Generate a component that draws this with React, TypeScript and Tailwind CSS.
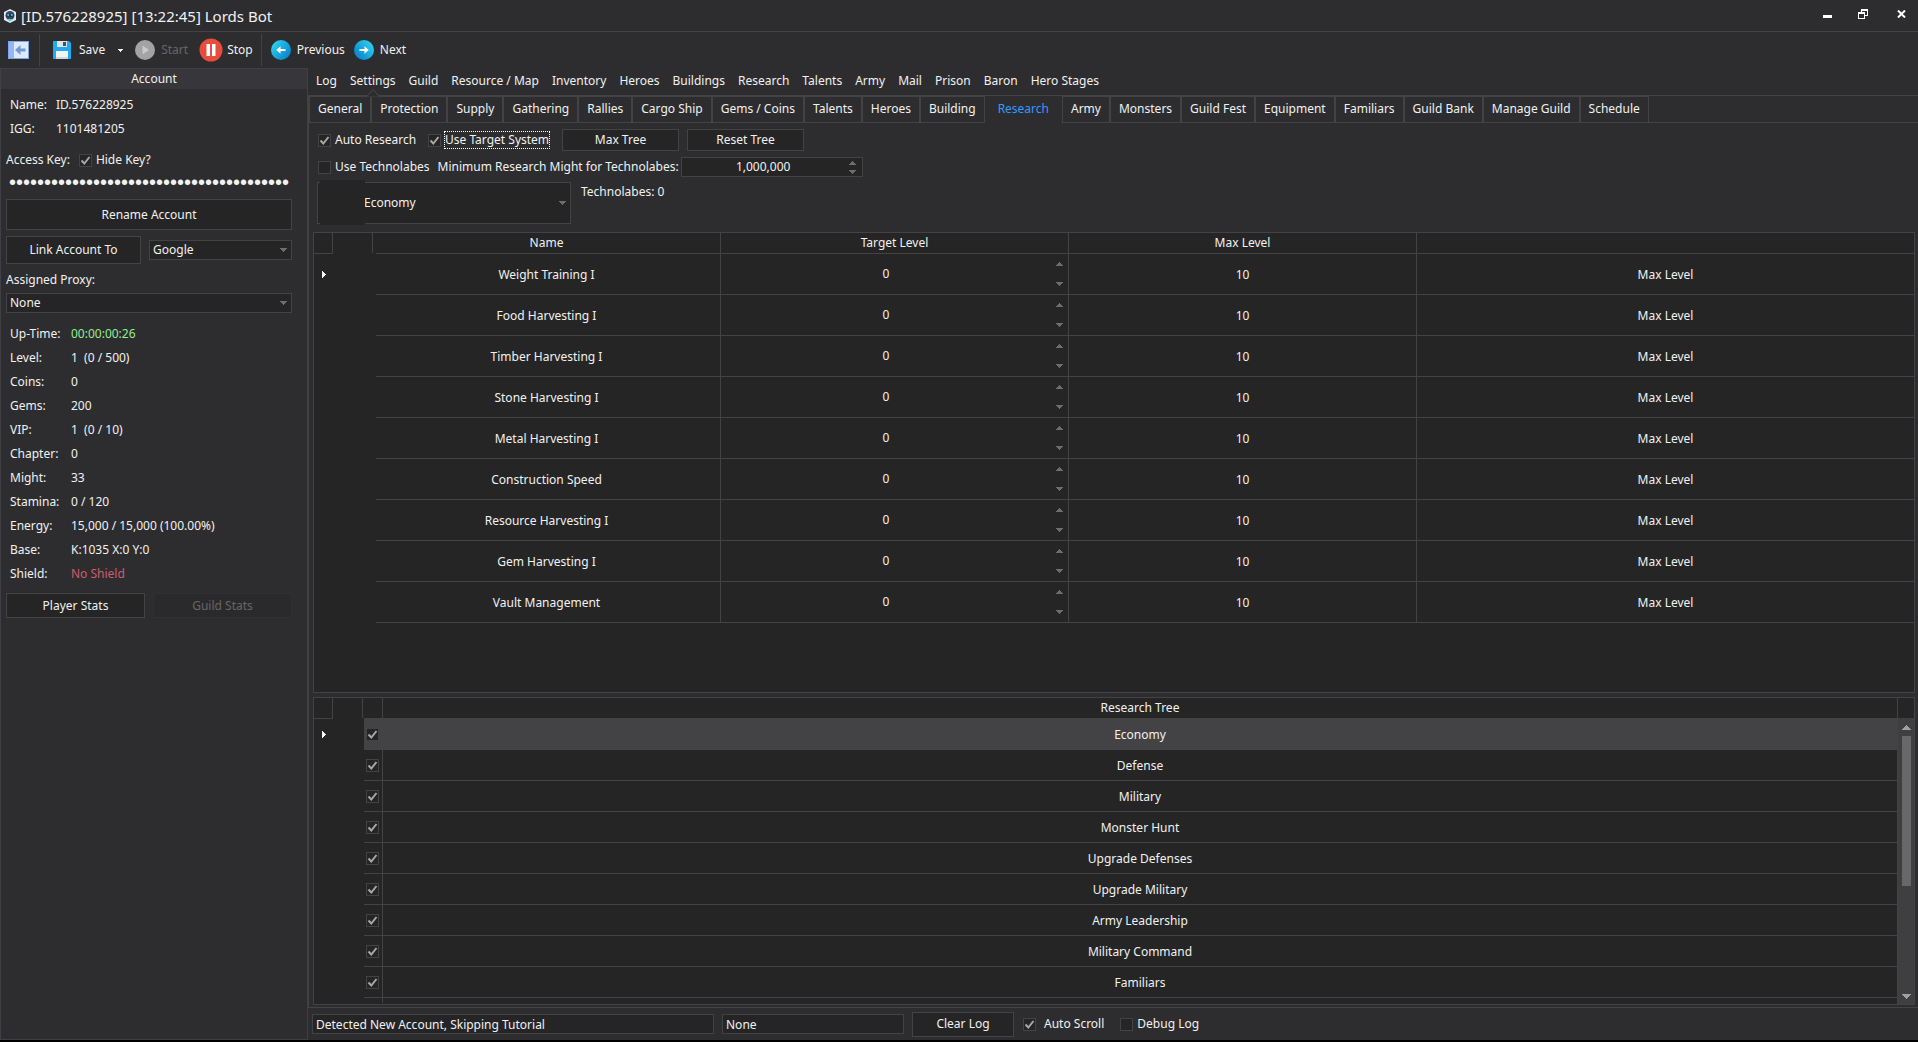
import { useState } from "react";
import type { ReactNode } from "react";

const menuItems = ["Log", "Settings", "Guild", "Resource / Map", "Inventory", "Heroes", "Buildings", "Research", "Talents", "Army", "Mail", "Prison", "Baron", "Hero Stages"];

const tabs = ["General", "Protection", "Supply", "Gathering", "Rallies", "Cargo Ship", "Gems / Coins", "Talents", "Heroes", "Building", "Research", "Army", "Monsters", "Guild Fest", "Equipment", "Familiars", "Guild Bank", "Manage Guild", "Schedule"];

const stats: [string, string, string?][] = [
  ["Up-Time:", "00:00:00:26", "text-[#90ee90]"],
  ["Level:", "1  (0 / 500)"],
  ["Coins:", "0"],
  ["Gems:", "200"],
  ["VIP:", "1  (0 / 10)"],
  ["Chapter:", "0"],
  ["Might:", "33"],
  ["Stamina:", "0 / 120"],
  ["Energy:", "15,000 / 15,000 (100.00%)"],
  ["Base:", "K:1035 X:0 Y:0"],
  ["Shield:", "No Shield", "text-[#cd5c6c]"],
];

const researches = ["Weight Training I", "Food Harvesting I", "Timber Harvesting I", "Stone Harvesting I", "Metal Harvesting I", "Construction Speed", "Resource Harvesting I", "Gem Harvesting I", "Vault Management"];

const trees = ["Economy", "Defense", "Military", "Monster Hunt", "Upgrade Defenses", "Upgrade Military", "Army Leadership", "Military Command", "Familiars"];

function Arrow({ dir, className }: { dir: "up" | "down"; className?: string }) {
  return (
    <svg viewBox="0 0 7 4" className={`h-1 w-[7px] ${className ?? "text-[#6d6d6d]"}`} fill="currentColor" shapeRendering="crispEdges">
      <path d={dir === "up" ? "M3 0h1v1h1v1h1v1h1v1H0V3h1V2h1V1h1z" : "M0 0h7v1H6v1H5v1H4v1H3V3H2V2H1V1H0z"} />
    </svg>
  );
}

function ScrollArrow({ dir }: { dir: "up" | "down" }) {
  return (
    <svg viewBox="0 0 9 5" className="h-[5px] w-[9px]" fill="#a0a0a0" shapeRendering="crispEdges">
      <path d={dir === "up" ? "M4 0h1v1h1v1h1v1h1v1h1v1H0V4h1V3h1V2h1V1h1z" : "M0 0h9v1H8v1H7v1H6v1H5v1H4V4H3V3H2V2H1V1H0z"} />
    </svg>
  );
}

function Check({ label, checked = false, focus = false, hidden = false, gap = "gap-1" }: { label: string; checked?: boolean; focus?: boolean; hidden?: boolean; gap?: string }) {
  const [on, setOn] = useState(checked);
  return (
    <label className={`flex items-center whitespace-nowrap ${gap}`}>
      <span className="relative flex size-[13px] shrink-0">
        <input type="checkbox" aria-label={label} checked={on} onChange={(e) => setOn(e.target.checked)} className="size-[13px] appearance-none border border-[#434346] bg-[#252525]" />
        {on && (
          <svg viewBox="0 0 13 13" className="pointer-events-none absolute inset-0 size-[13px]" fill="none" stroke="#a8a8a8" strokeWidth="2">
            <path d="M2.5 6.5l2.8 3L10.5 3" />
          </svg>
        )}
      </span>
      {!hidden && <span className={focus ? "-ml-px border border-dotted border-white leading-4" : ""}>{label}</span>}
    </label>
  );
}

function Button({ children, className, disabled }: { children: ReactNode; className: string; disabled?: boolean }) {
  return (
    <button type="button" disabled={disabled} className={`border text-center ${disabled ? "border-[#303032] bg-[#2a2a2c] text-[#666666]" : "border-[#434346] bg-[#252525]"} ${className}`}>
      {children}
    </button>
  );
}

function Select({ id, label, value, className, selectClass }: { id?: string; label?: string; value: string; className: string; selectClass: string }) {
  return (
    <span className={`relative flex items-center ${className}`}>
      <select id={id} aria-label={label} className={`h-full w-full appearance-none border border-[#434346] bg-[#252525] ${selectClass}`}>
        <option>{value}</option>
      </select>
      <Arrow dir="down" className="pointer-events-none absolute right-[5px] text-[#6d6d6d]" />
    </span>
  );
}

function Spin({ label, value }: { label: string; value: string }) {
  return (
    <span className="flex h-full items-stretch">
      <input aria-label={label} defaultValue={value} className="w-0 flex-1 bg-transparent text-center outline-none" />
      <span className="flex w-[17px] shrink-0 flex-col pr-px">
        <button type="button" aria-label={`Increase ${label}`} className="flex flex-1 items-center justify-center"><Arrow dir="up" /></button>
        <button type="button" aria-label={`Decrease ${label}`} className="flex flex-1 items-center justify-center"><Arrow dir="down" /></button>
      </span>
    </span>
  );
}

function RowMarker() {
  return (
    <svg viewBox="0 0 4 7" className="mx-auto h-[7px] w-1" fill="#f5f5f5" shapeRendering="crispEdges">
      <path d="M0 0h1v1h1v1h1v1h1v1H3v1H2v1H1v1H0z" />
    </svg>
  );
}

function TitleBar() {
  return (
    <header className="flex h-8 items-center border-b border-[#434346] pl-[3px]">
      <svg viewBox="0 0 14 14" className="size-[14px]">
        <path d="M7 0l6 3v8l-6 3-6-3V3z" fill="#e3eaf0" />
        <circle cx="7" cy="6.5" r="4.5" fill="#34495e" />
        <path d="M3.5 5.500h7v2h-7z" fill="#1c2b3a" />
        <circle cx="5.2" cy="6" r="1" fill="#4fc3f7" />
        <circle cx="8.8" cy="6" r="1" fill="#4fc3f7" />
        <path d="M3.5 10h7L7 12.500z" fill="#4dd0e1" />
      </svg>
      <h1 className="ml-1 text-[15px] leading-5">[ID.576228925] [13:22:45] Lords Bot</h1>
      <div className="ml-auto flex items-center pr-3 pb-1">
        <button type="button" aria-label="Minimize" className="flex h-4 w-6 items-center justify-center">
          <svg viewBox="0 0 9 9" className="size-[9px]"><path d="M0 6h9v3H0z" fill="#fff" /></svg>
        </button>
        <button type="button" aria-label="Restore" className="ml-3 flex h-4 w-6 items-center justify-center">
          <svg viewBox="0 0 10 10" className="size-[10px]" fill="#fff" fillRule="evenodd" shapeRendering="crispEdges">
            <path d="M3 0h7v7H7V6h2V2H4v1H3zM0 3h7v7H0zM1 5v4h5V5z" />
          </svg>
        </button>
        <button type="button" aria-label="Close" className="ml-[22px] flex h-4 w-[9px] items-center justify-center">
          <svg viewBox="0 0 9 8" className="h-2 w-[9px]" stroke="#fff" strokeWidth="2"><path d="M1 0.5l7 7M8 0.5l-7 7" /></svg>
        </button>
      </div>
    </header>
  );
}

function ArrowDisc({ flip }: { flip?: boolean }) {
  return (
    <svg viewBox="0 0 20 20" className="size-5">
      <defs>
        <linearGradient id={flip ? "discNext" : "discPrev"} x1={flip ? 1 : 0} y1="0.2" x2={flip ? 0 : 1} y2="1">
          <stop offset="0" stopColor="#2fd3ee" />
          <stop offset="1" stopColor="#0277c8" />
        </linearGradient>
      </defs>
      <circle cx="10" cy="10" r="10" fill={flip ? "url(#discNext)" : "url(#discPrev)"} />
      <path d={flip ? "M5.5 9h5V6.2l4.3 3.8-4.3 3.8V11h-5z" : "M14.5 9h-5V6.2L5.2 10l4.3 3.8V11h5z"} fill="#fff" />
    </svg>
  );
}

function Toolbar() {
  return (
    <nav aria-label="Toolbar" className="flex h-9 items-center">
      <button type="button" aria-label="Collapse panel" className="ml-2">
        <svg viewBox="0 0 21 18" className="h-[18px] w-[21px]">
          <path d="M0 0h21v18H0z" fill="#7ea6e8" />
          <path d="M1 1h5v16H1z" fill="#93b7f2" />
          <path d="M6 1h14v16H6z" fill="#dceafb" />
          <path d="M17.5 7.500h-5V4L7 9l5.500 5v-3.500h5z" fill="#7399d4" />
        </svg>
      </button>
      <span className="ml-[10px] h-8 w-px bg-[#434346]" />
      <button type="button" className="ml-[13px] flex items-center">
        <svg viewBox="0 0 18 18" className="size-[18px]">
          <path d="M0 0h16l2 2v16H0z" fill="#22aaf0" />
          <path d="M4 0h10v6H4z" fill="#dfe6ea" />
          <path d="M10 1h3v4h-3z" fill="#3c5566" />
          <path d="M3 10h12v8H3z" fill="#f4f4f4" />
          <path d="M3 16h12v2H3z" fill="#cfd8dc" />
        </svg>
        <span className="ml-2">Save</span>
      </button>
      <button type="button" aria-label="Save options" className="ml-[13px] flex h-5 w-[17px] items-center justify-start">
        <svg viewBox="0 0 5 3" className="h-[3px] w-[5px]" fill="#f0f0f0" shapeRendering="crispEdges"><path d="M0 0h5v1H4v1H3v1H2V2H1V1H0z" /></svg>
      </button>
      <button type="button" disabled className="flex items-center text-[#666666]">
        <svg viewBox="0 0 20 20" className="size-5"><circle cx="10" cy="10" r="10" fill="#a3a3a3" /><path d="M7.5 5.500l6.500 4.500-6.500 4.500z" fill="#c9c9c9" /></svg>
        <span className="ml-[6px]">Start</span>
      </button>
      <button type="button" className="ml-[11px] flex items-center">
        <svg viewBox="0 0 24 24" className="size-6"><circle cx="12" cy="12" r="11.5" fill="#e74c3c" /><path d="M7.500 6h3.500v12H7.500zM13 6h3.500v12H13z" fill="#fff" /></svg>
        <span className="ml-1">Stop</span>
      </button>
      <span className="ml-2 h-8 w-px bg-[#434346]" />
      <button type="button" className="ml-[9px] flex items-center"><ArrowDisc /><span className="ml-[6px]">Previous</span></button>
      <button type="button" className="ml-[9px] flex items-center"><ArrowDisc flip /><span className="ml-[6px]">Next</span></button>
    </nav>
  );
}

function AccountPanel() {
  return (
    <aside className="flex w-[308px] shrink-0 flex-col border border-[#3f3f46]">
      <h2 className="h-5 bg-[#37373b] text-center leading-5">Account</h2>
      <div className="flex flex-col pr-[15px] pl-[5px]">
        <dl className="grid grid-cols-[46px_1fr] pt-1 pl-1 leading-6">
          <dt>Name:</dt><dd>ID.576228925</dd>
          <dt>IGG:</dt><dd>1101481205</dd>
        </dl>
        <div className="mt-[9px] flex h-5 items-center gap-[9px]">
          <label htmlFor="access-key">Access Key:</label>
          <Check label="Hide Key?" checked />
        </div>
        <input id="access-key" type="password" defaultValue={"0".repeat(40)} className="mt-0.5 h-5 bg-transparent pl-[3px] font-['Liberation_Sans',sans-serif] text-xl outline-none" />
        <Button className="mt-[7px] h-[31px]">Rename Account</Button>
        <div className="mt-[6px] flex items-center gap-2">
          <Button className="h-7 w-[135px]">Link Account To</Button>
          <Select label="Link target" value="Google" className="h-5 flex-1" selectClass="pl-[3px]" />
        </div>
        <label htmlFor="proxy" className="mt-[6px] leading-5">Assigned Proxy:</label>
        <Select id="proxy" value="None" className="mt-[3px] h-5" selectClass="pl-[3px]" />
        <dl className="mt-[9px] grid grid-cols-[61px_1fr] pl-1 leading-6">
          {stats.map(([k, v, c]) => (
            <div key={k} className="contents">
              <dt>{k}</dt>
              <dd className={`whitespace-pre ${c ?? ""}`}>{v}</dd>
            </div>
          ))}
        </dl>
        <div className="mt-[7px] flex gap-2">
          <Button className="h-[25px] flex-1">Player Stats</Button>
          <Button className="h-[25px] flex-1" disabled>Guild Stats</Button>
        </div>
      </div>
    </aside>
  );
}

function TargetTable() {
  const line = "border-b border-[#434346]";
  return (
    <div className="min-h-0 flex-[3] overflow-hidden border border-[#434346] bg-[#252525]">
      <table className="w-full table-fixed border-separate border-spacing-0 text-center">
        <colgroup>
          <col className="w-[19px]" /><col className="w-10" /><col className="w-[21.75%]" /><col className="w-[21.75%]" /><col className="w-[21.75%]" /><col />
        </colgroup>
        <thead>
          <tr className="h-[21px]">
            <th className={`border-r ${line}`} />
            <th className="border-r border-[#434346]" />
            {["Name", "Target Level", "Max Level"].map((h) => <th key={h} className={`border-r p-0 font-normal ${line}`}>{h}</th>)}
            <th className={line} />
          </tr>
        </thead>
        <tbody>
          {researches.map((name, i) => (
            <tr key={name} className="h-[41px]">
              <td className="p-0">{i === 0 && <RowMarker />}</td>
              <td className="relative p-0"><span className="absolute -top-px left-0 h-[42px] w-[43px] bg-[#252525]" /></td>
              <td className={`border-r p-0 pt-0.5 ${line}`}>{name}</td>
              <td className={`h-[41px] border-r p-0 ${line}`}><Spin label={`${name} target level`} value="0" /></td>
              <td className={`border-r p-0 pt-0.5 ${line}`}>10</td>
              <td className={`p-0 pt-0.5 ${line}`}><button type="button" className="w-full">Max Level</button></td>
            </tr>
          ))}
        </tbody>
      </table>
    </div>
  );
}

function TreeTable() {
  const line = "border-b border-[#434346]";
  return (
    <div className="mt-1 flex min-h-0 flex-[2] overflow-hidden border border-[#434346] bg-[#252525]">
      <table className="h-0 flex-1 table-fixed border-separate border-spacing-0 text-center">
        <colgroup>
          <col className="w-[19px]" /><col className="w-[30px]" /><col className="w-5" /><col />
        </colgroup>
        <thead>
          <tr className="h-[21px]">
            <th className={`border-r ${line}`} />
            <th className="border-r border-[#434346]" />
            <th className={`border-r ${line}`} />
            <th className={`p-0 font-normal ${line}`}>Research Tree</th>
          </tr>
        </thead>
        <tbody>
          {trees.map((name, i) => (
            <tr key={name} className={`h-[31px] ${i === 0 ? "bg-[#434345]" : ""}`}>
              <td className="bg-[#252525] p-0">{i === 0 && <RowMarker />}</td>
              <td className="relative bg-[#252525] p-0"><span className="absolute -top-px left-0 h-8 w-[31px] bg-[#252525]" /></td>
              <td className={`border-r p-0 ${line}`}><span className="flex justify-end pr-[3px]"><Check label={`Enable ${name}`} checked hidden /></span></td>
              <td className={`p-0 pt-0.5 ${line}`}>{name}</td>
            </tr>
          ))}
          <tr className="h-[5px]">
            <td className="p-0" />
            <td className="p-0" />
            <td className="border-r border-[#434346] p-0" />
            <td className="p-0" />
          </tr>
        </tbody>
      </table>
      <div className="flex w-[17px] flex-col border-l border-[#434346]">
        <div className="h-5" />
        <div className="flex min-h-0 flex-1 flex-col items-center bg-[#3f3f41]">
          <button type="button" aria-label="Scroll up" className="flex h-[18px] items-center"><ScrollArrow dir="up" /></button>
          <div className="h-[150px] w-[9px] bg-[#686868]" />
          <button type="button" aria-label="Scroll down" className="mt-auto flex h-4 items-center"><ScrollArrow dir="down" /></button>
        </div>
      </div>
    </div>
  );
}

function TabStrip() {
  return (
    <div role="tablist" className="flex h-[27px]">
      {tabs.map((t) => (
        <button
          key={t}
          type="button"
          role="tab"
          aria-selected={t === "Research"}
          className={`border pb-0.5 whitespace-nowrap ${t === "Research" ? "border-transparent px-3 text-[#3399ff]" : "border-[#434346] px-2"}`}
        >
          {t}
        </button>
      ))}
      <div className="flex-1 border-b border-[#434346]" />
    </div>
  );
}

function StatusBar() {
  return (
    <footer className="flex h-8 items-center pl-1">
      <input aria-label="Status" readOnly value="Detected New Account, Skipping Tutorial" className="h-5 w-[402px] border border-[#434346] bg-[#252525] pl-[3px] outline-none" />
      <input aria-label="Task" readOnly value="None" className="ml-2 h-5 w-[182px] border border-[#434346] bg-[#252525] pl-[3px] outline-none" />
      <Button className="ml-2 h-[25px] w-[102px]">Clear Log</Button>
      <div className="ml-[9px] flex gap-4">
        <Check label="Auto Scroll" checked gap="gap-2" />
        <Check label="Debug Log" />
      </div>
    </footer>
  );
}

export default function App() {
  return (
    <div className="flex h-screen flex-col overflow-hidden border-b-2 border-black bg-[#2d2d2f] font-['Noto_Sans',sans-serif] text-xs text-[#f1f1f1]">
      <TitleBar />
      <Toolbar />
      <div className="flex min-h-0 flex-1">
        <AccountPanel />
        <main className="flex min-w-0 flex-1 flex-col">
          <nav aria-label="Main" className="flex h-7 items-center gap-[13px] border-b border-[#434346] pb-0.5 pl-2">
            {menuItems.map((m) => (
              <a key={m} href="#" className="relative whitespace-nowrap">
                {m}
                {m === "Settings" && (
                  <svg viewBox="0 0 14 8" className="absolute top-4 left-1/2 -ml-[7px] h-2 w-[14px]" fill="#2d2d2f" stroke="#4a4a4e">
                    <path d="M0.5 7.500L7 0.500l6.500 7" />
                  </svg>
                )}
              </a>
            ))}
          </nav>
          <section className="flex min-h-0 flex-1 flex-col border-b border-l border-[#434346]">
            <TabStrip />
            <div className="flex min-h-0 flex-1 flex-col pt-[6px] pr-[3px] pb-[2px] pl-1">
              <div className="flex items-center pl-[5px]">
                <div className="w-[110px]"><Check label="Auto Research" checked /></div>
                <div className="w-[134px]"><Check label="Use Target System" checked focus /></div>
                <Button className="h-[22px] w-[117px]">Max Tree</Button>
                <Button className="ml-2 h-[22px] w-[117px]">Reset Tree</Button>
              </div>
              <div className="mt-[6px] flex h-5 items-center pl-[5px]">
                <Check label="Use Technolabes" />
                <span className="ml-2 whitespace-nowrap">Minimum Research Might for Technolabes:</span>
                <div className="ml-0.5 h-5 w-[182px] border border-[#434346] bg-[#252525]"><Spin label="minimum research might" value="1,000,000" /></div>
              </div>
              <div className="mt-[5px] mb-2 flex pl-1">
                <div className="relative">
                  <Select label="Research tree" value="Economy" className="h-[42px] w-[254px]" selectClass="pl-[46px]" />
                  <span className="pointer-events-none absolute -top-0.5 left-[3px] h-[45px] w-[45px] bg-[#252525]" />
                </div>
                <span className="ml-[10px] leading-5">Technolabes: 0</span>
              </div>
              <TargetTable />
              <TreeTable />
            </div>
          </section>
          <StatusBar />
        </main>
      </div>
    </div>
  );
}
